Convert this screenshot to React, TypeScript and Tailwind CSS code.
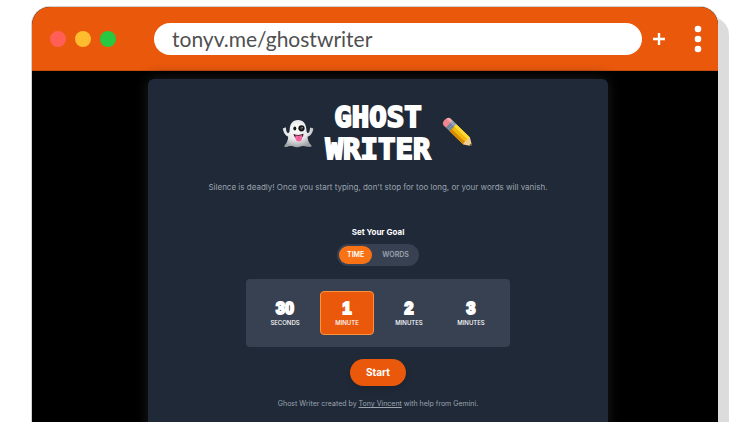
import { useState } from 'react';

const goals = [
  { amount: '30', unit: 'Seconds' },
  { amount: '1', unit: 'Minute' },
  { amount: '2', unit: 'Minutes' },
  { amount: '3', unit: 'Minutes' },
];

function Ghost() {
  return (
    <svg viewBox="0 0 32 29" className="w-8 shrink-0" aria-hidden="true">
      <defs>
        <radialGradient id="ghost" cx="45%" cy="35%" r="65%">
          <stop offset="0" stopColor="#ffffff" />
          <stop offset="0.6" stopColor="#e6e6e7" />
          <stop offset="1" stopColor="#9fa1a5" />
        </radialGradient>
      </defs>
      <path
        d="M16 1C10.500 1 8 5 7.700 10.500C7.600 13 7 14.500 5.800 14C4.300 13.300 4.200 11.500 4 9.500C3.800 8 2.600 8 2.500 9.300C1.400 8.500.5 9.400 1 10.700C1.600 13.500 3 16.500 6.200 17.800C6 21.500 4.800 24 2.600 26.400C1.800 27.400 2.700 28 4 27.900C6.500 27.700 8 26.800 9.700 27.100C11.800 27.500 13 28.500 15.500 28.200C18 28 19.300 26.700 21.500 26.900C24 27.100 26 28.200 28.600 27.700C29.900 27.400 29.900 26.700 29 25.900C26.800 23.800 25.700 21 25.600 17.800C29 16.600 30.400 13.600 31.200 10.700C31.600 9.400 30.700 8.500 29.600 9.300C29.400 8 28.200 8.200 28 9.500C27.700 11.500 27.600 13.300 26.200 14C25 14.500 24.500 13 24.400 10.500C24 5 21.500 1 16 1Z"
        fill="url(#ghost)"
      />
      <ellipse cx="12.800" cy="9.500" rx="1.500" ry="1.900" fill="#151515" />
      <circle cx="19.500" cy="9.300" r="3.100" fill="#151515" />
      <circle cx="19.500" cy="9.300" r="1.400" fill="#3f4145" />
      <circle cx="20.200" cy="8.500" r=".6" fill="#b5b5b5" />
      <path d="M11.500 15Q16.500 17 21.600 14.800Q21 19.600 16.700 19.700Q12.300 19.500 11.500 15Z" fill="#30151e" />
      <path d="M13.300 16.300Q16.500 17.300 20 16.100V20Q19.600 22.600 16.900 22.600Q14 22.500 13.500 20Z" fill="#f56aa5" />
      <path d="M16.700 17.500V20.500" stroke="#d9407f" strokeWidth=".7" />
    </svg>
  );
}

function Pencil() {
  return (
    <svg viewBox="0 0 32 32" className="w-8 shrink-0" aria-hidden="true">
      <g transform="translate(4.500 4.500) rotate(44)">
        <path d="M1-4.800H4V4.800H1Q-2.500 4.400-2.500 0Q-2.500-4.400 1-4.800Z" fill="#ef8790" />
        <path d="M0-4.800H4V-2H-2Q-1.500-4.400 0-4.800Z" fill="#f7a8ad" />
        <path d="M4-4.800H9V4.800H4Z" fill="#7f91a8" />
        <path d="M4-4.800H9V-1.500H4Z" fill="#a3b6cc" />
        <path d="M5.500-4.800V4.800M7.500-4.800V4.800" stroke="#56677e" strokeWidth=".6" />
        <path d="M9-4.800H28V4.800H9Z" fill="#f4b70b" />
        <path d="M9-4.800H28V-1.700H9Z" fill="#ffda3a" />
        <path d="M9 1.700H28V4.800H9Z" fill="#d68b08" />
        <path d="M28-4.800L34.500-.8V.8L28 4.800Q26.500 3 27.500 1.500Q26 0 27.500-1.500Q26.500-3 28-4.800Z" fill="#f4ce91" />
        <path d="M33-1.600L35.500 0L33 1.600Z" fill="#453f3b" />
      </g>
    </svg>
  );
}

function BrowserBar() {
  return (
    <header className="flex h-16 shrink-0 items-center border-b border-[#c94f10] bg-[#ea580c]">
      <div className="ml-[18px] flex gap-[9px]">
        <span className="size-4 rounded-full bg-[#ff5f57]" />
        <span className="size-4 rounded-full bg-[#febc2e]" />
        <span className="size-4 rounded-full bg-[#28c840]" />
      </div>
      <input
        type="text"
        aria-label="Address"
        defaultValue="tonyv.me/ghostwriter"
        className="ml-[38px] h-8 min-w-0 flex-1 rounded-full bg-white px-[18px] font-['Lato',sans-serif] text-[21px] text-[#505050] outline-none"
      />
      <button type="button" aria-label="New tab" className="ml-[11px]">
        <svg viewBox="0 0 12 12" className="size-3" aria-hidden="true">
          <path d="M6 0V12M0 6H12" stroke="white" strokeWidth="2.400" />
        </svg>
      </button>
      <button type="button" aria-label="Menu" className="mr-4 ml-[29px]">
        <svg viewBox="0 0 8 28" className="h-7 w-2" aria-hidden="true">
          <g fill="white">
            <circle cx="4" cy="4" r="3.300" />
            <circle cx="4" cy="14" r="3.300" />
            <circle cx="4" cy="24" r="3.300" />
          </g>
        </svg>
      </button>
    </header>
  );
}

export default function App() {
  const [mode, setMode] = useState('time');
  const [selected, setSelected] = useState(1);

  return (
    <div className="h-screen overflow-hidden bg-white px-8 pt-[7px] font-['Inter',sans-serif]">
      <div className="flex min-h-screen flex-col rounded-t-[18px] bg-black shadow-[11px_10px_0_#dcdcdc,0_0_0_1px_#d0d0d0]">
        <div className="overflow-hidden rounded-t-[18px]">
          <BrowserBar />
        </div>
        <div className="flex flex-1 flex-col pt-2 pl-1.5">
          <main className="mx-auto flex w-[460px] max-w-full flex-1 flex-col items-center rounded-t-md bg-[#1f2937] px-6 pt-[22px] text-center text-white shadow-[0_0_14px_#1c1c1c]">
            <div className="flex items-center gap-3">
              <Ghost />
              <h1 className="font-['DejaVu_Sans_Mono',monospace] text-[29px] leading-8 font-bold uppercase [-webkit-text-stroke:2px_white]">
                Ghost
                <br />
                Writer
              </h1>
              <Pencil />
            </div>
            <p className="mt-3.5 text-[8px] leading-4 text-[#9ca3af]">
              Silence is deadly! Once you start typing, don't stop for too long, or your words will vanish.
            </p>

            <h2 className="mt-[31px] text-[8px] leading-3 font-bold">Set Your Goal</h2>
            <div className="mt-1.5 flex gap-0.5 rounded-full bg-[#374151] p-0.5 text-[7px] font-semibold">
              <button
                type="button"
                aria-pressed={mode === 'time'}
                onClick={() => setMode('time')}
                className={`h-[18px] rounded-full px-2 ${mode === 'time' ? 'bg-[#f97316] text-white' : 'text-[#9ca3af]'}`}
              >
                TIME
              </button>
              <button
                type="button"
                aria-pressed={mode === 'words'}
                onClick={() => setMode('words')}
                className={`h-[18px] rounded-full px-2 ${mode === 'words' ? 'bg-[#f97316] text-white' : 'text-[#9ca3af]'}`}
              >
                WORDS
              </button>
            </div>

            <div className="mt-[13px] grid grid-cols-4 gap-2 rounded bg-[#374151] p-3">
              {goals.map((goal, i) => (
                <button
                  key={goal.amount}
                  type="button"
                  aria-pressed={selected === i}
                  onClick={() => setSelected(i)}
                  className={`flex h-11 w-[54px] flex-col items-center justify-center rounded border ${
                    selected === i ? 'border-[#fb923c] bg-[#ea580c]' : 'border-transparent'
                  }`}
                >
                  <span className="font-['Liberation_Sans',sans-serif] text-base leading-5 font-bold [-webkit-text-stroke:2px_white]">
                    {goal.amount}
                  </span>
                  <span className="text-[6px] leading-2 font-medium uppercase">{goal.unit}</span>
                </button>
              ))}
            </div>

            <button type="button" className="mt-3 h-[27px] rounded-full bg-[#ea580c] px-4 text-[10px] font-bold shadow-md">
              Start
            </button>
            <p className="mt-3 text-[7px] leading-3 text-[#9ca3af]">
              Ghost Writer created by{' '}
              <a href="#" className="underline">
                Tony Vincent
              </a>{' '}
              with help from Gemini.
            </p>
          </main>
        </div>
      </div>
    </div>
  );
}
